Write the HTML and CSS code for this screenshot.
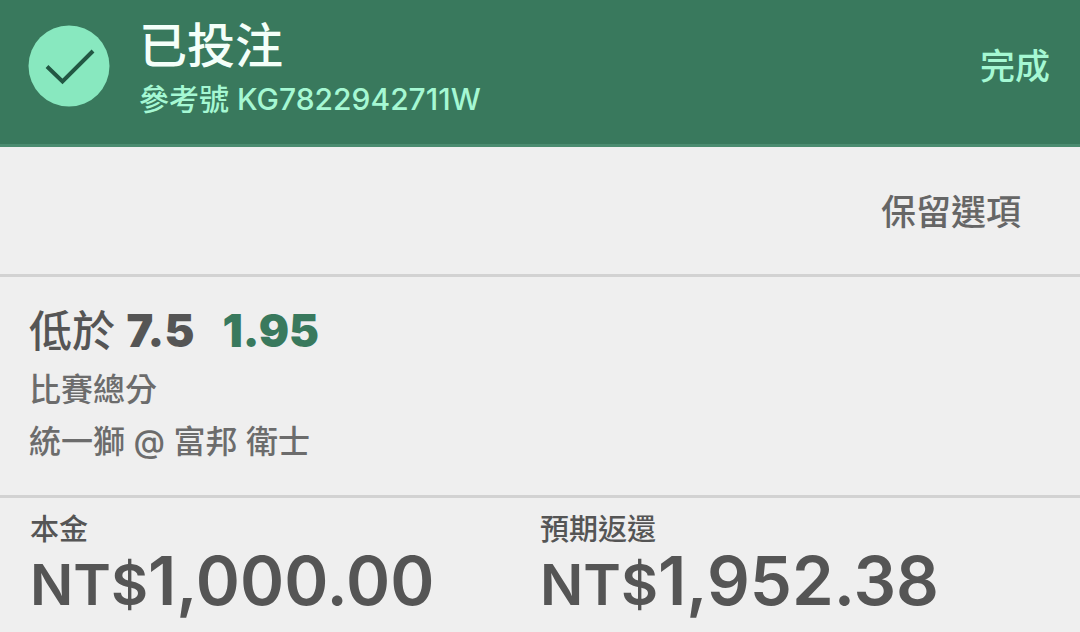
FILE: index.html
```html
<!DOCTYPE html>
<html lang="zh-Hant">
<head>
<meta charset="utf-8">
<meta name="viewport" content="width=device-width, initial-scale=1">
<title>已投注</title>
<link rel="stylesheet" href="styles.css">
</head>
<body>
<main class="receipt">
  <header class="banner">
    <svg class="tick" viewBox="0 0 82 82" aria-hidden="true">
      <circle cx="41" cy="41" r="40.5" fill="#88e8bf"/>
      <path d="M19 41.500 34.500 56.500 65 26" fill="none" stroke="#225743" stroke-width="4"/>
    </svg>
    <div class="banner-text">
      <h1 class="title">已投注</h1>
      <p class="reference">參考號 KG7822942711W</p>
    </div>
    <button class="done" type="button">完成</button>
  </header>
  <div class="actions">
    <button class="keep" type="button">保留選項</button>
  </div>
  <section class="bet">
    <h2 class="selection"><span class="pick">低於 <b>7.5</b></span><span class="odds">1.95</span></h2>
    <p class="detail">比賽總分</p>
    <p class="detail">統一獅 @ 富邦 衛士</p>
  </section>
  <dl class="amounts">
    <div class="amount">
      <dt class="label">本金</dt>
      <dd class="value"><span class="currency">NT$</span>1,000.00</dd>
    </div>
    <div class="amount">
      <dt class="label">預期返還</dt>
      <dd class="value"><span class="currency">NT$</span>1,952.38</dd>
    </div>
  </dl>
</main>
</body>
</html>
```

FILE: styles.css
```css
* {
  box-sizing: border-box;
  margin: 0;
}

body {
  background: #efefef;
  color: #555;
  font-family: Inter, "Noto Sans CJK TC", sans-serif;
}

button {
  padding: 0;
  border: 0;
  background: none;
  font: inherit;
  color: inherit;
  cursor: pointer;
}

.banner {
  display: flex;
  align-items: flex-start;
  gap: 29px;
  padding: 16px 30px 22px 28px;
  background: #39795d;
  border-bottom: 3px solid #4b8c70;
}

.tick {
  flex: none;
  width: 82px;
  height: 82px;
  margin-top: 9px;
}

.banner-text {
  flex: 1;
}

.title {
  font-size: 48px;
  font-weight: 500;
  line-height: 60px;
  color: #f4fff9;
}

.reference {
  font-size: 30px;
  font-weight: 500;
  line-height: 46px;
  color: #a5f8d3;
}

.done {
  margin-top: 26px;
  font-size: 35px;
  font-weight: 500;
  line-height: 48px;
  color: #a5f8d3;
}

.actions {
  display: flex;
  justify-content: flex-end;
  padding: 41px 59px 38px;
  border-bottom: 3px solid #d2d2d2;
}

.keep {
  font-size: 35px;
  font-weight: 500;
  line-height: 48px;
  color: #666;
}

.bet {
  padding: 24px 29px 27px;
  border-bottom: 3px solid #d2d2d2;
}

.selection {
  display: flex;
  align-items: baseline;
  gap: 28px;
  font-size: 43px;
  font-weight: 500;
  line-height: 60px;
  padding-bottom: 3px;
}

.selection b,
.odds {
  font-size: 45px;
  font-weight: 900;
}

.odds {
  color: #39795d;
}

.detail {
  font-size: 32px;
  font-weight: 500;
  line-height: 52px;
  color: #6c6c6c;
}

.amounts {
  display: grid;
  grid-template-columns: 1fr 1fr;
  padding: 14px 30px 10px;
}

.label {
  font-size: 29px;
  font-weight: 500;
  line-height: 36px;
}

.value {
  margin: 0;
  font-size: 67px;
  font-weight: 600;
  line-height: 66px;
}

.currency {
  font-size: 57px;
}
```
